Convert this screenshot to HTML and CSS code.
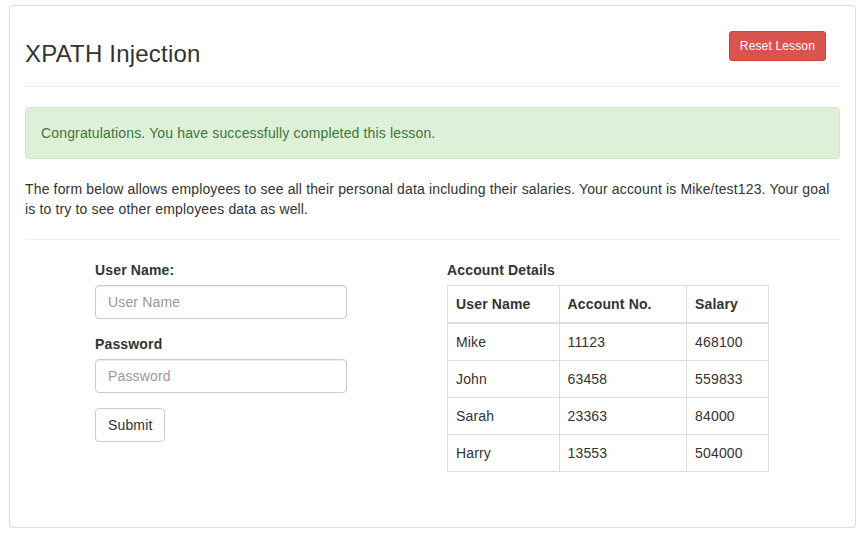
FILE: index.html
```html
<!DOCTYPE html>
<html>
<head>
<meta charset="utf-8">
<link rel="stylesheet" href="styles.css">
</head>
<body>
<div class="panel">
  <div class="lesson-header">
    <h3 class="lesson-title">XPATH Injection</h3>
    <button class="btn btn-danger">Reset Lesson</button>
  </div>
  <div class="alert-success">Congratulations. You have successfully completed this lesson.</div>
  <p class="intro">The form below allows employees to see all their personal data including their salaries. Your account is Mike/test123. Your goal is to try to see other employees data as well.</p>
  <hr class="divider">
  <div class="lesson-body">
    <form class="login-form">
      <div class="form-group">
        <label class="field-label">User Name:</label>
        <input class="form-control" type="text" placeholder="User Name">
      </div>
      <div class="form-group">
        <label class="field-label">Password</label>
        <input class="form-control" type="password" placeholder="Password">
      </div>
      <button type="button" class="btn btn-default">Submit</button>
    </form>
    <div class="account">
      <div class="field-label">Account Details</div>
      <table class="table-bordered">
        <thead>
          <tr><th class="c1">User Name</th><th class="c2">Account No.</th><th class="c3">Salary</th></tr>
        </thead>
        <tbody>
          <tr><td>Mike</td><td>11123</td><td>468100</td></tr>
          <tr><td>John</td><td>63458</td><td>559833</td></tr>
          <tr><td>Sarah</td><td>23363</td><td>84000</td></tr>
          <tr><td>Harry</td><td>13553</td><td>504000</td></tr>
        </tbody>
      </table>
    </div>
  </div>
</div>
</body>
</html>
```
FILE: styles.css
```css
* { box-sizing: border-box; }
html, body { margin: 0; background: #fff; }
body {
  padding: 5px 5px 0 9px;
  font-family: "Liberation Sans", Arial, Helvetica, sans-serif;
  font-size: 14px;
  line-height: 20px;
  letter-spacing: 0.15px;
  color: #333;
}
.panel {
  height: 523px;
  border: 1px solid #ddd;
  border-radius: 4px;
  box-shadow: 0 1px 1px rgba(0,0,0,0.08);
  padding: 0 15px 0 15px;
  background: #fff;
}
.lesson-header {
  display: flex;
  justify-content: space-between;
  align-items: flex-start;
  border-bottom: 1px solid #eee;
  height: 81px;
}
.lesson-title {
  margin: 35px 0 0 0;
  font-size: 24px;
  line-height: 26px;
  font-weight: 500;
  letter-spacing: 0.2px;
  color: #333;
}
.btn {
  font-family: inherit;
  letter-spacing: inherit;
  display: inline-block;
  border: 1px solid transparent;
  border-radius: 4px;
  cursor: pointer;
}
.btn-danger {
  margin: 25px 14px 0 0;
  padding: 5px 10px;
  font-size: 12px;
  line-height: 18px;
  border-radius: 3px;
  background: #d9534f;
  border-color: #d43f3a;
  color: #fff;
}
.alert-success {
  margin-top: 20px;
  padding: 15px;
  border: 1px solid #d6e9c6;
  border-radius: 4px;
  background: #dff0d8;
  color: #3c763d;
}
.intro {
  margin: 20px 0 0 0;
}
.divider {
  margin: 20px 0 0 0;
  border: 0;
  border-top: 1px solid #eee;
  height: 0;
}
.lesson-body {
  display: grid;
  grid-template-columns: 252px 322px;
  column-gap: 100px;
  padding-left: 70px;
  margin-top: 20px;
}
.form-group { margin-bottom: 15px; }
.field-label {
  display: block;
  font-weight: bold;
  margin-bottom: 5px;
}
.form-control {
  display: block;
  width: 100%;
  height: 34px;
  padding: 6px 12px;
  font-family: inherit;
  letter-spacing: inherit;
  font-size: 14px;
  color: #555;
  border: 1px solid #ccc;
  border-radius: 4px;
  box-shadow: inset 0 1px 1px rgba(0,0,0,0.075);
  background: #fff;
}
.form-control::placeholder { color: #999; }
.btn-default {
  padding: 6px 12px;
  font-size: 14px;
  line-height: 20px;
  background: #fff;
  border-color: #ccc;
  color: #333;
}
.table-bordered {
  border-collapse: collapse;
  border-spacing: 0;
  border: 1px solid #ddd;
  width: 322px;
}
.table-bordered th,
.table-bordered td {
  border: 1px solid #ddd;
  padding: 8px;
  line-height: 20px;
  text-align: left;
  vertical-align: top;
}
.table-bordered thead th { border-bottom-width: 2px; font-weight: bold; }
.c1 { width: 112px; }
.c2 { width: 128px; }
.c3 { width: 82px; }
```
